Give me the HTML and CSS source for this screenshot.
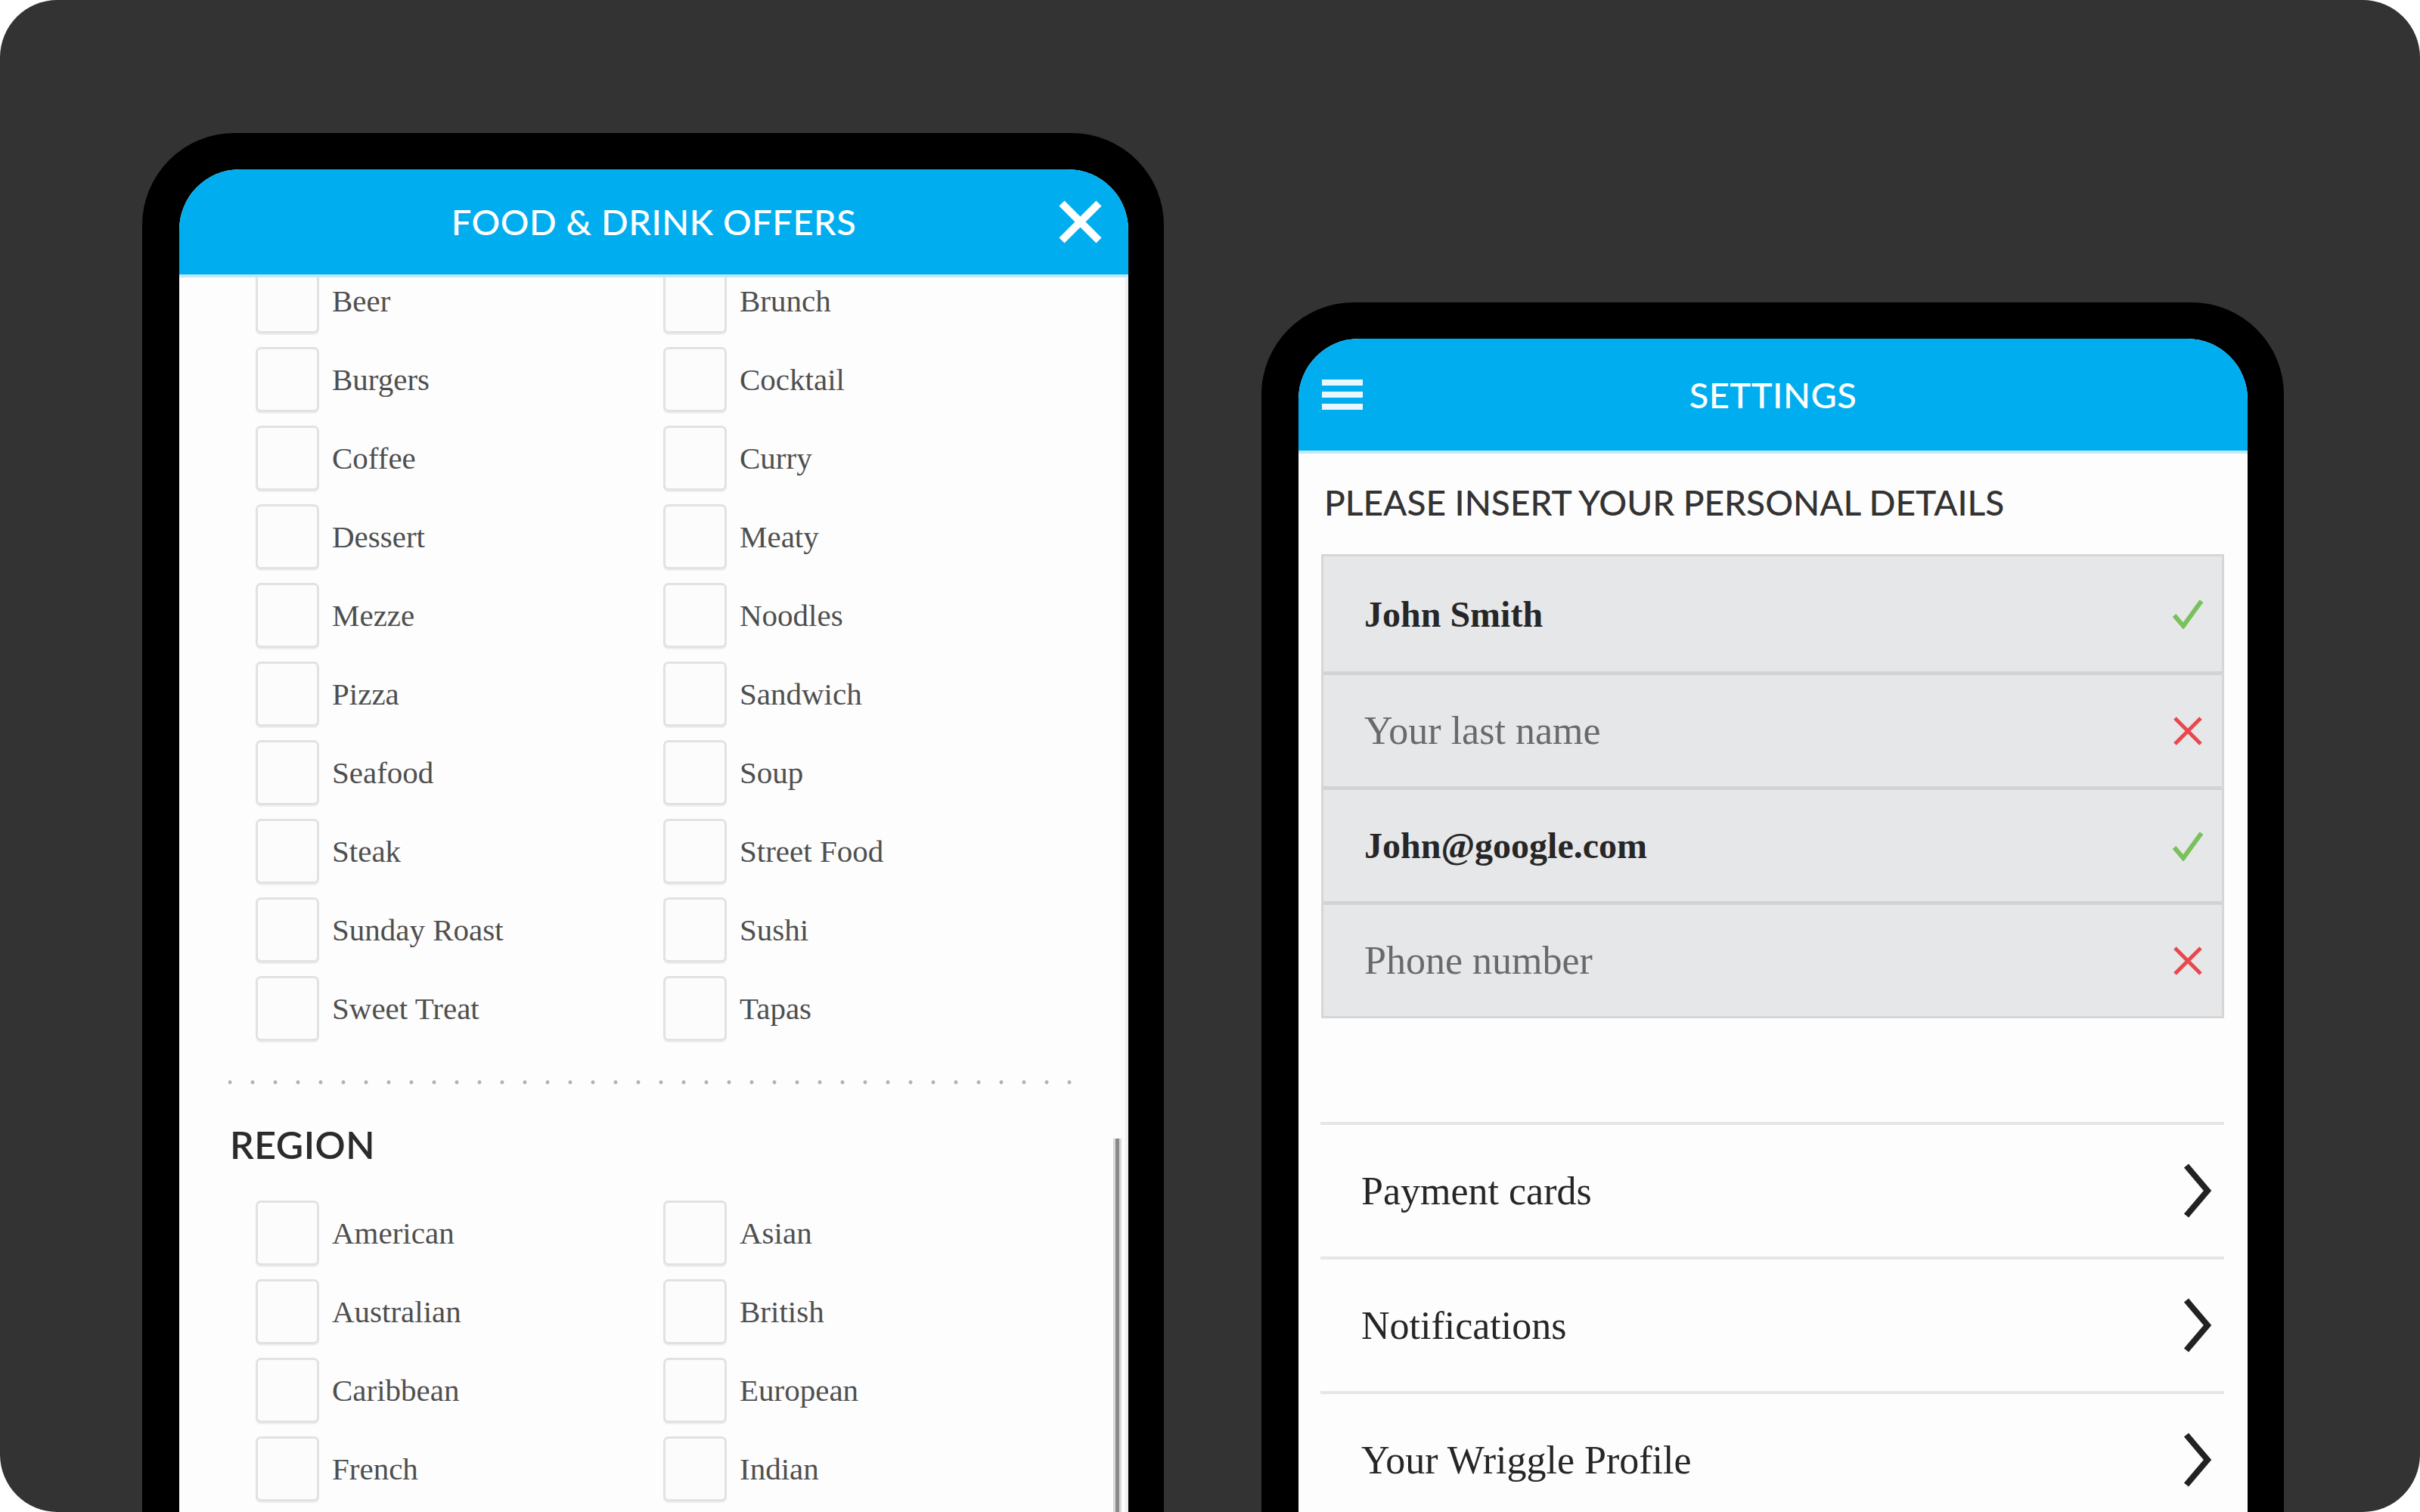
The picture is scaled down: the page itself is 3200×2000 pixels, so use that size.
FILE: index.html
```html
<!DOCTYPE html>
<html lang="en">
<head>
<meta charset="utf-8">
<title>Food &amp; Drink Offers / Settings</title>
<link rel="stylesheet" href="styles.css">
</head>
<body>
<div class="stage">
  <div class="phone phone-left">
    <div class="screen">
      <header class="bar bar-left">
        <span></span>
        <h1 class="bar-title">FOOD &amp; DRINK OFFERS</h1>
        <button class="icon-btn close" aria-label="Close">
          <svg width="61" height="61" viewBox="0 0 61 61"><path d="M6 6 L55 55 M55 6 L6 55" stroke="#fff" stroke-width="10" fill="none"/></svg>
        </button>
      </header>
      <div class="scroll">
        <div class="scroll-inner">
          <ul class="opts">
            <li class="opt"><span class="box"></span><span class="lbl">Beer</span></li>
            <li class="opt"><span class="box"></span><span class="lbl">Brunch</span></li>
            <li class="opt"><span class="box"></span><span class="lbl">Burgers</span></li>
            <li class="opt"><span class="box"></span><span class="lbl">Cocktail</span></li>
            <li class="opt"><span class="box"></span><span class="lbl">Coffee</span></li>
            <li class="opt"><span class="box"></span><span class="lbl">Curry</span></li>
            <li class="opt"><span class="box"></span><span class="lbl">Dessert</span></li>
            <li class="opt"><span class="box"></span><span class="lbl">Meaty</span></li>
            <li class="opt"><span class="box"></span><span class="lbl">Mezze</span></li>
            <li class="opt"><span class="box"></span><span class="lbl">Noodles</span></li>
            <li class="opt"><span class="box"></span><span class="lbl">Pizza</span></li>
            <li class="opt"><span class="box"></span><span class="lbl">Sandwich</span></li>
            <li class="opt"><span class="box"></span><span class="lbl">Seafood</span></li>
            <li class="opt"><span class="box"></span><span class="lbl">Soup</span></li>
            <li class="opt"><span class="box"></span><span class="lbl">Steak</span></li>
            <li class="opt"><span class="box"></span><span class="lbl">Street Food</span></li>
            <li class="opt"><span class="box"></span><span class="lbl">Sunday Roast</span></li>
            <li class="opt"><span class="box"></span><span class="lbl">Sushi</span></li>
            <li class="opt"><span class="box"></span><span class="lbl">Sweet Treat</span></li>
            <li class="opt"><span class="box"></span><span class="lbl">Tapas</span></li>
          </ul>
          <div class="dots"></div>
          <h2 class="section">REGION</h2>
          <ul class="opts">
            <li class="opt"><span class="box"></span><span class="lbl">American</span></li>
            <li class="opt"><span class="box"></span><span class="lbl">Asian</span></li>
            <li class="opt"><span class="box"></span><span class="lbl">Australian</span></li>
            <li class="opt"><span class="box"></span><span class="lbl">British</span></li>
            <li class="opt"><span class="box"></span><span class="lbl">Caribbean</span></li>
            <li class="opt"><span class="box"></span><span class="lbl">European</span></li>
            <li class="opt"><span class="box"></span><span class="lbl">French</span></li>
            <li class="opt"><span class="box"></span><span class="lbl">Indian</span></li>
          </ul>
        </div>
        <div class="scrollbar"></div>
      </div>
    </div>
  </div>

  <div class="phone phone-right">
    <div class="screen">
      <header class="bar bar-right">
        <button class="icon-btn menu" aria-label="Menu">
          <svg width="54" height="40" viewBox="0 0 54 40"><rect x="0" y="0" width="54" height="8" fill="#eaf7fe"/><rect x="0" y="16" width="54" height="8" fill="#eaf7fe"/><rect x="0" y="32" width="54" height="8" fill="#eaf7fe"/></svg>
        </button>
        <h1 class="bar-title">SETTINGS</h1>
        <span></span>
      </header>
      <div class="settings">
        <p class="intro">PLEASE INSERT YOUR PERSONAL DETAILS</p>
        <div class="fields">
          <div class="field"><span class="val">John Smith</span>
            <svg class="ok" width="42" height="40" viewBox="0 0 42 40"><path d="M3 22 L15 36 L39 3" stroke="#79c15c" stroke-width="6" fill="none"/></svg></div>
          <div class="field"><span class="ph">Your last name</span>
            <svg class="bad" width="42" height="42" viewBox="0 0 42 42"><path d="M4 4 L38 38 M38 4 L4 38" stroke="#e9474e" stroke-width="5" fill="none"/></svg></div>
          <div class="field"><span class="val">John@google.com</span>
            <svg class="ok" width="42" height="40" viewBox="0 0 42 40"><path d="M3 22 L15 36 L39 3" stroke="#79c15c" stroke-width="6" fill="none"/></svg></div>
          <div class="field"><span class="ph">Phone number</span>
            <svg class="bad" width="42" height="42" viewBox="0 0 42 42"><path d="M4 4 L38 38 M38 4 L4 38" stroke="#e9474e" stroke-width="5" fill="none"/></svg></div>
        </div>
        <ul class="menu-list">
          <li class="menu-item"><span>Payment cards</span>
            <svg width="40" height="72" viewBox="0 0 40 72"><path d="M6 3 L34 36 L6 69" stroke="#222" stroke-width="8" fill="none"/></svg></li>
          <li class="menu-item"><span>Notifications</span>
            <svg width="40" height="72" viewBox="0 0 40 72"><path d="M6 3 L34 36 L6 69" stroke="#222" stroke-width="8" fill="none"/></svg></li>
          <li class="menu-item"><span>Your Wriggle Profile</span>
            <svg width="40" height="72" viewBox="0 0 40 72"><path d="M6 3 L34 36 L6 69" stroke="#222" stroke-width="8" fill="none"/></svg></li>
        </ul>
      </div>
    </div>
  </div>
</div>
</body>
</html>
```

FILE: styles.css
```css
* { box-sizing: border-box; }
html, body { margin: 0; padding: 0; background: #ffffff; }
ul { list-style: none; margin: 0; padding: 0; }
h1, h2, p { margin: 0; }

.stage {
  width: 3200px;
  height: 2000px;
  background: #333333;
  border-radius: 76px;
  overflow: hidden;
  display: flex;
  align-items: flex-start;
  padding-left: 188px;
  gap: 129px;
}

.phone {
  background: #000;
  border-radius: 122px 122px 0 0;
  display: flex;
  flex-direction: column;
}
.phone-left {
  width: 1351px;
  height: 1900px;
  margin-top: 176px;
  padding: 48px 47px 0 49px;
}
.phone-right {
  width: 1352px;
  height: 1700px;
  margin-top: 400px;
  padding: 48px 48px 0 49px;
}

.screen {
  flex: 1;
  background: #fdfdfd;
  border-radius: 80px 80px 0 0;
  overflow: hidden;
  display: flex;
  flex-direction: column;
}

.bar {
  flex: none;
  background: #00aeef;
  border-bottom: 4px solid #c2e8fa;
  display: grid;
  grid-template-columns: 1fr auto 1fr;
  align-items: center;
}
.bar-left { height: 143px; padding: 0 33px; }
.bar-right { height: 152px; padding: 0 31px; }

.bar-title {
  font-family: "Lato", "Open Sans", sans-serif;
  font-weight: 500;
  font-size: 47px;
  color: #ffffff;
  letter-spacing: 0.5px;
  line-height: 1;
}

.icon-btn {
  background: none;
  border: 0;
  padding: 0;
  display: flex;
}
.close { justify-self: end; }
.menu { justify-self: start; }

/* ---------- filter list ---------- */
.scroll {
  flex: 1;
  position: relative;
  overflow: hidden;
  border-right: 4px solid #eeeeee;
}
.scroll-inner { margin-top: -21px; }

.opts {
  display: grid;
  grid-template-columns: 539px 539px;
  padding-left: 101px;
}
.opt {
  height: 104px;
  display: flex;
  align-items: center;
  gap: 17px;
}
.box {
  width: 84px;
  height: 86px;
  border: 3px solid #e2e2e2;
  border-radius: 7px;
  background: #fcfcfc;
  box-shadow: 0 2px 0 #eeeeee;
}
.lbl {
  font-family: "Liberation Serif", "Times New Roman", serif;
  font-size: 41px;
  color: #4f4f4f;
}

.dots {
  margin: 43px 0 0 65px;
  width: 1124px;
  height: 5px;
  background-image: radial-gradient(circle, #b3b3b3 2.2px, transparent 2.8px);
  background-size: 30px 5px;
  background-position: -13px 0;
}

.section {
  margin: 50px 0 35px 67px;
  height: 60px;
  line-height: 60px;
  font-family: "Lato", "Open Sans", sans-serif;
  font-weight: 600;
  font-size: 50px;
  letter-spacing: 0.5px;
  color: #2b2b2b;
}

.scrollbar {
  position: absolute;
  right: 5px;
  top: 1139px;
  bottom: 0;
  width: 11px;
  background: #8a8a8a;
  border-left: 3px solid #d8d8d8;
  border-right: 3px solid #d8d8d8;
}

/* ---------- settings ---------- */
.settings {
  flex: 1;
  padding: 0 31px 0 30px;
}
.intro {
  margin: 35px 0 0 4px;
  height: 60px;
  line-height: 60px;
  font-family: "Lato", "Open Sans", sans-serif;
  font-weight: 500;
  font-size: 46px;
  color: #333333;
}
.fields {
  margin-top: 38px;
  border: 3px solid #d6d6d6;
  background: #e6e7e8;
}
.field {
  height: 152px;
  display: flex;
  align-items: center;
  justify-content: space-between;
  padding: 0 24px 0 54px;
}
.field + .field { border-top: 5px solid #d3d3d3; }
.val {
  font-family: "Liberation Serif", "Times New Roman", serif;
  font-weight: 700;
  font-size: 48px;
  color: #262626;
}
.ph {
  font-family: "Liberation Serif", "Times New Roman", serif;
  font-size: 52px;
  color: #6a6a6a;
}

.menu-list { margin: 137px 0 0 -1px; }
.menu-item {
  height: 178px;
  border-top: 4px solid #e6e6e6;
  display: flex;
  align-items: center;
  justify-content: space-between;
  padding: 0 16px 0 54px;
  font-family: "Liberation Serif", "Times New Roman", serif;
  font-size: 52px;
  color: #262626;
}
```
